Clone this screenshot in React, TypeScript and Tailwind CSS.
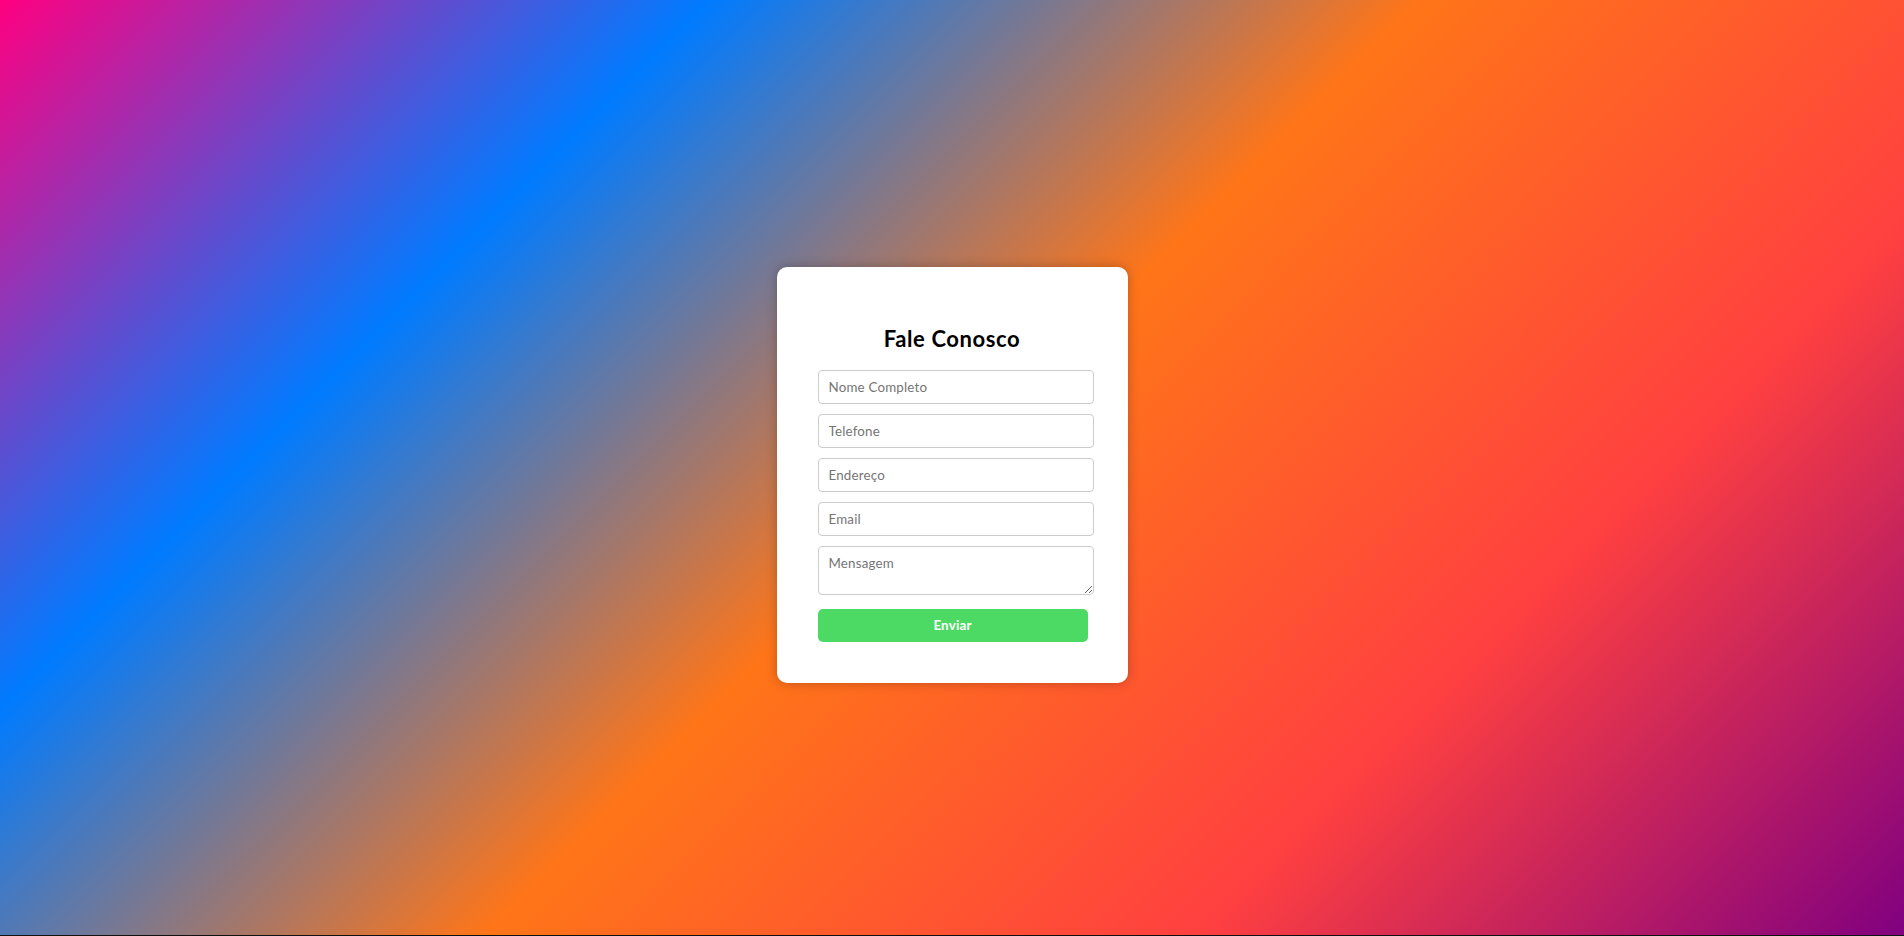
import React from "react";

export default function App() {
  const inputCls =
    "ml-[1px] w-[276px] h-[34px] shrink-0 rounded-[4px] border border-[#cccccc] bg-white px-[10px] text-[13.33px] tracking-[0.2px] text-black placeholder:text-[#757575] outline-none";
  return (
    <div
      className="flex flex-col w-full h-[936px] overflow-hidden"
      style={{ fontFamily: "Lato, 'Open Sans', sans-serif" }}
    >
      <div className="flex h-[935px] w-full items-start justify-center pt-[267px] bg-[linear-gradient(135deg,#ff0080,#007bff,#ff7518,#ff4040,#800080)]">
        <div className="flex w-[351px] flex-col rounded-[10px] bg-white px-[40px] pt-[40px] pb-[41px] shadow-[0_0_12px_rgba(0,0,0,0.25)]">
          <h2 className="mt-[18px] mb-[17px] h-[28px] text-center text-[22px] leading-[28px] tracking-[0.6px] font-bold text-black">
            Fale Conosco
          </h2>
          <form className="flex flex-col gap-[10px]" onSubmit={(e) => e.preventDefault()}>
            <input className={inputCls} placeholder="Nome Completo" />
            <input className={inputCls} placeholder="Telefone" />
            <input className={inputCls} placeholder="Endereço" />
            <input className={inputCls} placeholder="Email" />
            <textarea
              className="ml-[1px] block w-[276px] h-[49px] shrink-0 rounded-[4px] border border-[#cccccc] bg-white px-[10px] py-[8px] text-[13.33px] leading-[16px] tracking-[0.2px] text-black placeholder:text-[#757575] outline-none"
              placeholder="Mensagem"
            />
            <button
              type="submit"
              className="ml-[1px] mt-[4px] h-[33px] w-[270px] rounded-[5px] bg-[#4cd964] text-[13.33px] font-bold tracking-[0.2px] text-white"
            >
              Enviar
            </button>
          </form>
        </div>
      </div>
      <div className="h-[1px] w-full bg-[#111111]" />
    </div>
  );
}
